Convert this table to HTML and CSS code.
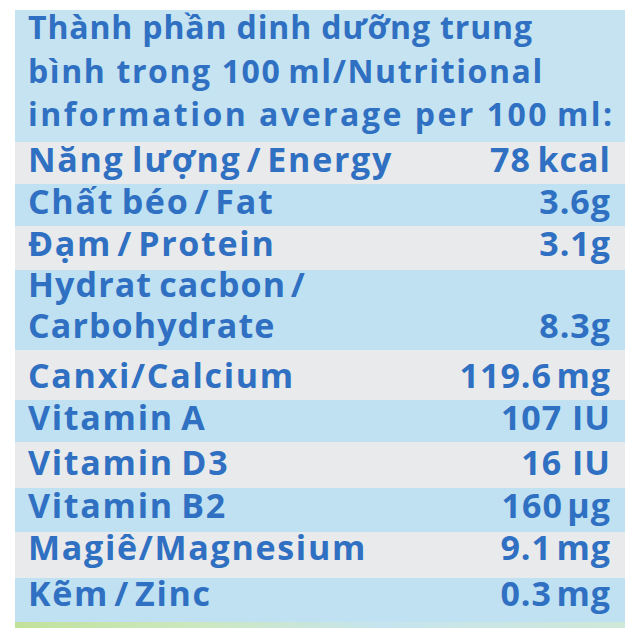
FILE: index.html
```html
<!DOCTYPE html>
<html lang="vi">
<head>
<meta charset="utf-8">
<title>Thành phần dinh dưỡng</title>
<link rel="stylesheet" href="styles.css">
</head>
<body>
<div class="panel">
  <div class="head">
    <h1 class="title">
      <span class="line l1">Thành phần dinh dưỡng trung</span>
      <span class="line l2">bình trong 100&#8201;ml/Nutritional</span>
      <span class="line l3">information average per 100&#8201;ml:</span>
    </h1>
  </div>
  <div class="row light row-s"><span class="name">Năng lượng&#8202;/&#8202;Energy</span><span class="val">78&#8201;kcal</span></div>
  <div class="row blue row-s"><span class="name">Chất béo&#8202;/&#8202;Fat</span><span class="val">3.6g</span></div>
  <div class="row light"><span class="name">Đạm&#8202;/&#8202;Protein</span><span class="val">3.1g</span></div>
  <div class="row blue row-carb">
    <span class="name name-2"><span class="sub">Hydrat cacbon&#8202;/</span><span class="sub">Carbohydrate</span></span>
    <span class="val">8.3g</span>
  </div>
  <div class="row light row-ca"><span class="name">Canxi/Calcium</span><span class="val">119.6&#8202;mg</span></div>
  <div class="row blue row-s"><span class="name">Vitamin A</span><span class="val">107 IU</span></div>
  <div class="row light row-m row-low"><span class="name">Vitamin D3</span><span class="val">16 IU</span></div>
  <div class="row blue"><span class="name">Vitamin B2</span><span class="val">160&#8202;µg</span></div>
  <div class="row light row-m row-high"><span class="name">Magiê/Magnesium</span><span class="val">9.1&#8202;mg</span></div>
  <div class="row blue row-high"><span class="name">Kẽm&#8202;/&#8202;Zinc</span><span class="val">0.3&#8202;mg</span></div>
  <div class="foot"></div>
</div>
</body>
</html>
```
FILE: styles.css
```css
html, body {
  margin: 0;
  padding: 0;
  background: #ffffff;
}
body {
  padding: 10px 15px 0 15px;
  font-family: "Open Sans", "Noto Sans", sans-serif;
  font-weight: 700;
  color: #2f70c2;
}
.panel {
  width: 610px;
  display: flex;
  flex-direction: column;
  background: #c3e2f1;
}
.head {
  height: 132px;
  box-sizing: border-box;
  padding: 0 8px 0 13px;
  background: #c5e3f1;
}
.title {
  margin: 0;
  display: flex;
  flex-direction: column;
  gap: 9.5px;
  font-size: 32px;
  line-height: 34px;
  font-weight: 700;
  white-space: nowrap;
}
.line { display: block; }
.l1 { letter-spacing: 0.85px; }
.l2 { letter-spacing: 1.6px; }
.l3 { letter-spacing: 2.5px; }
.row {
  height: 44px;
  box-sizing: border-box;
  padding: 0 14px 0 13px;
  display: flex;
  justify-content: space-between;
  align-items: flex-start;
  font-size: 34px;
  line-height: 34px;
  letter-spacing: 1.7px;
  word-spacing: -3px;
  white-space: nowrap;
}
.row-s { height: 42px; }
.row-m { height: 46px; }
.row-low { padding-top: 3px; }
.row-high .name, .row-high .val { margin-top: -2px; }
.row-carb { height: 80px; }
.row-carb .val { margin-top: 38px; }
.row-ca { height: 50px; padding-top: 8px; }
.light { background: #e9eaeb; }
.blue { background: #bfe1f1; }
.name-2 {
  display: flex;
  flex-direction: column;
  gap: 7px;
  margin-top: -3px;
  letter-spacing: 1.1px;
}
.sub { display: block; }
.val { text-align: right; letter-spacing: 1px; word-spacing: 0; }
.foot {
  height: 6px;
  background: linear-gradient(90deg, #c2e19a 0%, #cde8c0 30%, #c6e4ee 60%, #cfe8d8 100%);
}
```
